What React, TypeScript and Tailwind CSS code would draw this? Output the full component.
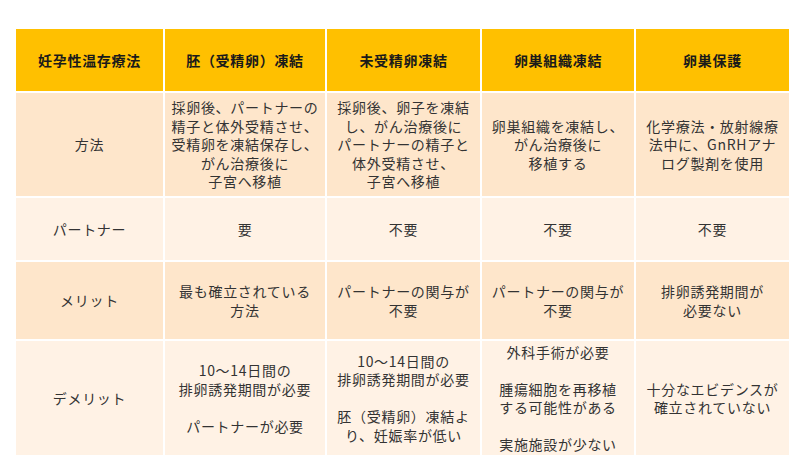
import React from 'react';

type Row = { label: string; cells: string[][]; height: string; tone: 'dark' | 'light' };

const headers = ['妊孕性温存療法', '胚（受精卵）凍結', '未受精卵凍結', '卵巣組織凍結', '卵巣保護'];

// Each cell is a list of lines; empty string gives a blank line
const rows: Row[] = [
  {
    label: '方法',
    height: 'h-[103px]',
    tone: 'dark',
    cells: [
      ['採卵後、パートナーの', '精子と体外受精させ、', '受精卵を凍結保存し、', 'がん治療後に', '子宮へ移植'],
      ['採卵後、卵子を凍結', 'し、がん治療後に', 'パートナーの精子と', '体外受精させ、', '子宮へ移植'],
      ['卵巣組織を凍結し、', 'がん治療後に', '移植する'],
      ['化学療法・放射線療', '法中に、GnRHアナ', 'ログ製剤を使用'],
    ],
  },
  {
    label: 'パートナー',
    height: 'h-[62px]',
    tone: 'light',
    cells: [['要'], ['不要'], ['不要'], ['不要']],
  },
  {
    label: 'メリット',
    height: 'h-[77px]',
    tone: 'dark',
    cells: [
      ['最も確立されている', '方法'],
      ['パートナーの関与が', '不要'],
      ['パートナーの関与が', '不要'],
      ['排卵誘発期間が', '必要ない'],
    ],
  },
  {
    label: 'デメリット',
    height: 'h-[114px]',
    tone: 'light',
    cells: [
      ['10～14日間の', '排卵誘発期間が必要', '', 'パートナーが必要'],
      ['10～14日間の', '排卵誘発期間が必要', '', '胚（受精卵）凍結よ', 'り、妊娠率が低い'],
      ['外科手術が必要', '', '腫瘍細胞を再移植', 'する可能性がある', '', '実施施設が少ない'],
      ['十分なエビデンスが', '確立されていない'],
    ],
  },
];

function Cell({ lines, className }: { lines: string[]; className: string }) {
  return (
    <div className={`flex flex-col items-center justify-center text-center ${className}`}>
      {lines.map((line, i) => (
        <span key={i} className="block h-[18.5px] whitespace-nowrap">
          {line}
        </span>
      ))}
    </div>
  );
}

export default function App() {
  return (
    <div
      className="h-[470px] w-[810px] bg-white pl-[16px] pt-[29px] text-[14px] leading-[18.5px] tracking-[0.05em] text-[#333]"
      style={{ fontFamily: '"Noto Sans CJK JP", "Noto Sans", sans-serif' }}
    >
      <div className="grid w-[773px] grid-cols-[147px_160px_153px_152px_153px] gap-[2px] bg-white">
        {headers.map((h) => (
          <div
            key={h}
            className="flex h-[62px] items-center justify-center bg-[#ffc000] font-bold text-[#1a1a1a]"
          >
            {h}
          </div>
        ))}
        {rows.map((row) => {
          const bg = row.tone === 'dark' ? 'bg-[#fee6cb]' : 'bg-[#fff2e5]';
          return (
            <React.Fragment key={row.label}>
              <Cell lines={[row.label]} className={`${row.height} ${bg}`} />
              {row.cells.map((lines, i) => (
                <Cell key={i} lines={lines} className={`${row.height} ${bg}`} />
              ))}
            </React.Fragment>
          );
        })}
      </div>
    </div>
  );
}
